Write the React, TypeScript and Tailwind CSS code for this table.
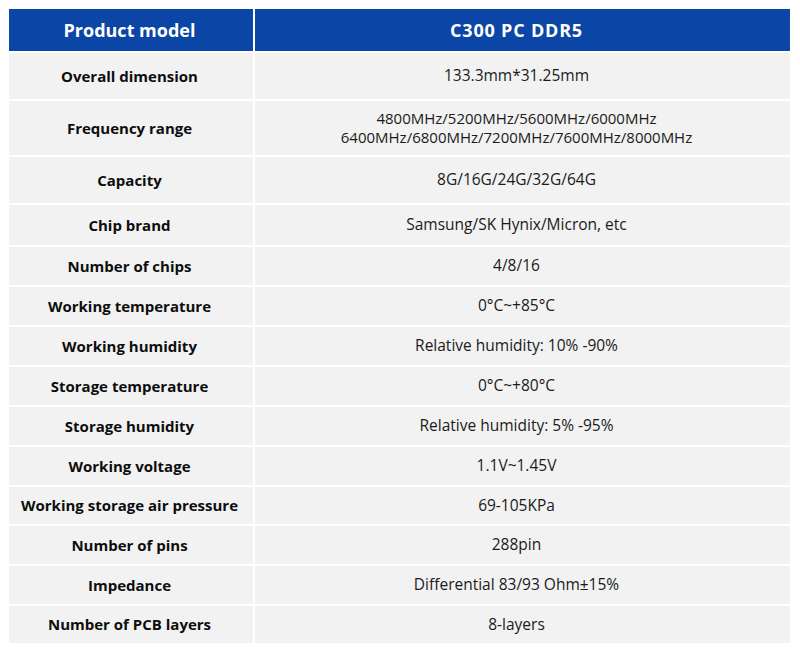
import React from 'react';

const rows: { label: string; value: string[]; h: string }[] = [
    { label: 'Overall dimension', value: ['133.3mm*31.25mm'], h: 'h-[46px]' },
    {
        label: 'Frequency range',
        value: ['4800MHz/5200MHz/5600MHz/6000MHz', '6400MHz/6800MHz/7200MHz/7600MHz/8000MHz'],
        h: 'h-[54px]',
    },
    { label: 'Capacity', value: ['8G/16G/24G/32G/64G'], h: 'h-[46px]' },
    { label: 'Chip brand', value: ['Samsung/SK Hynix/Micron, etc'], h: 'h-[40px]' },
    { label: 'Number of chips', value: ['4/8/16'], h: 'h-[38px]' },
    { label: 'Working temperature', value: ['0°C~+85°C'], h: 'h-[38px]' },
    { label: 'Working humidity', value: ['Relative humidity: 10% -90%'], h: 'h-[38px]' },
    { label: 'Storage temperature', value: ['0°C~+80°C'], h: 'h-[38px]' },
    { label: 'Storage humidity', value: ['Relative humidity: 5% -95%'], h: 'h-[38px]' },
    { label: 'Working voltage', value: ['1.1V~1.45V'], h: 'h-[38px]' },
    { label: 'Working storage air pressure', value: ['69-105KPa'], h: 'h-[37px]' },
    { label: 'Number of pins', value: ['288pin'], h: 'h-[38px]' },
    { label: 'Impedance', value: ['Differential 83/93 Ohm±15%'], h: 'h-[38px]' },
    { label: 'Number of PCB layers', value: ['8-layers'], h: 'h-[37px]' },
];

export default function App() {
    return (
        <div className="w-[800px] h-[663px] bg-white pt-[9px] pl-[9px]" style={{ fontFamily: '"Open Sans", "Noto Sans", sans-serif' }}>
            <div className="w-[781px] grid grid-cols-[244px_1fr] gap-[2px] bg-white">
                {/* header */}
                <div className="h-[42px] bg-[#0b45a5] flex items-center justify-center pr-[3px] text-white font-bold text-[18px]">
                    Product model
                </div>
                <div className="h-[42px] bg-[#0b45a5] flex items-center justify-center pr-[12px] text-white font-bold text-[18px] tracking-[0.8px]">
                    C300 PC DDR5
                </div>

                {rows.map((r) => (
                    <React.Fragment key={r.label}>
                        <div className={`${r.h} bg-[#f2f2f2] flex items-center justify-center pr-[3px] text-[15px] font-bold text-[#0d0d0d]`}>
                            {r.label}
                        </div>
                        <div
                            className={`${r.h} bg-[#f2f2f2] flex flex-col items-center justify-center pr-[12px] text-[#1a1a1a] ${
                                r.value.length > 1 ? 'text-[15px] leading-[19px]' : 'text-[15.5px]'
                            }`}
                        >
                            {r.value.map((v) => (
                                <span key={v}>{v}</span>
                            ))}
                        </div>
                    </React.Fragment>
                ))}
            </div>
        </div>
    );
}
